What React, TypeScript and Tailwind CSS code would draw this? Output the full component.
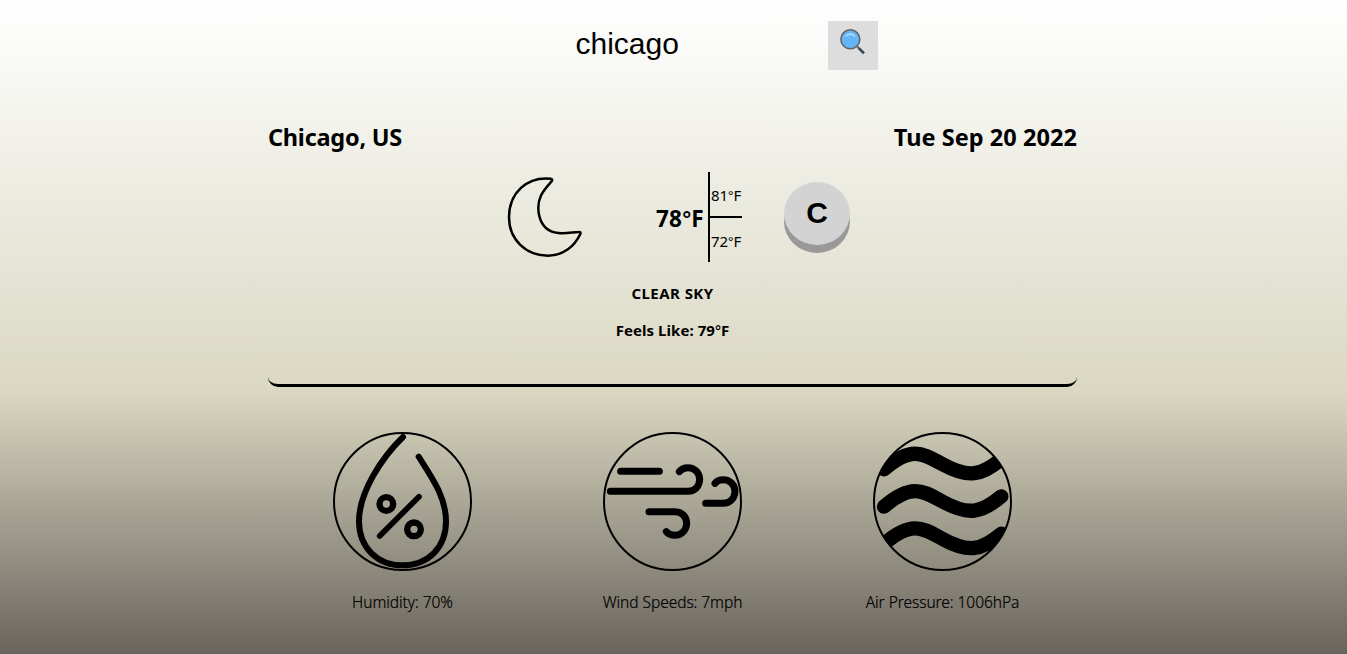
import type { ReactNode } from "react";

const SANS = "font-['Noto_Sans','Open_Sans',sans-serif]";

function SearchIcon() {
  return (
    <svg className="block h-[30px] w-[30px]" viewBox="0 0 90 90" fill="none">
      <path d="M53 51 L62 60" stroke="#616161" strokeWidth="6" />
      <path d="M60 58 L75 73" stroke="#37474f" strokeWidth="8" />
      <circle cx="34" cy="31" r="28.5" fill="#64b5f6" stroke="#616161" strokeWidth="4.5" />
      <path d="M21 21 Q34 9 47 21" stroke="#bbdefb" strokeWidth="4" strokeLinecap="round" />
    </svg>
  );
}

function MoonIcon() {
  return (
    <svg
      className="block h-[90px] w-[90px]"
      viewBox="30 20 270 270"
      fill="none"
      stroke="#000"
      strokeWidth="7.5"
      strokeLinejoin="round"
    >
      <path d="M182 40 C111 33 57 82 57 156 C57 223 108 271 174 271 C219 271 253 244 271 206 C273 201 270 199 265 200 C240 202 224 205 205 203 C169 199 153 177 147 148 C137 98 164 71 184 49 C188 44 187 41 182 40 Z" />
    </svg>
  );
}

function Temp({ value }: { value: number }) {
  return (
    <>
      {value}
      <span className="font-['Liberation_Sans',Arial,sans-serif] leading-none">°</span>F
    </>
  );
}

function Gauge({ label, children }: { label: string; children: ReactNode }) {
  return (
    <div className="flex w-[270px] flex-col items-center">
      <svg
        className="block h-[139px] w-[139px]"
        viewBox="24 21 417 417"
        fill="none"
        stroke="#000"
        strokeLinecap="round"
        strokeLinejoin="round"
      >
        <circle cx="232.5" cy="229.5" r="205.5" strokeWidth="6" />
        {children}
      </svg>
      <p className="mt-[19px] h-6 whitespace-nowrap text-[15.5px] leading-6 font-light tracking-[-0.05px] [-webkit-text-stroke:0.2px_#000]">
        {label}
      </p>
    </div>
  );
}

export default function App() {
  return (
    <main
      className={`h-[654px] w-full overflow-hidden bg-[linear-gradient(180deg,#fff_0%,#ecebe1_30%,#dad8c1_60%,#69645d_100%)] text-black ${SANS}`}
    >
      <form className="ml-[568px] flex h-[91px] pt-[21px]" onSubmit={(e) => e.preventDefault()}>
        <input
          className="h-[45px] w-[260px] bg-transparent pl-[7.5px] font-['Liberation_Sans',Arial,sans-serif] text-[30px] outline-none"
          defaultValue="chicago"
          aria-label="City"
        />
        <button className="flex h-[49px] w-[50px] items-start bg-[#ddd] pt-[8px] pl-[11px]" aria-label="Search">
          <SearchIcon />
        </button>
      </form>

      <section className="ml-[268px] w-[809px] rounded-b-[10px] border-b-[3px] border-black">
        <div className="flex h-[81px] justify-between pt-[30px] text-[23.5px] leading-8 font-bold whitespace-nowrap">
          <h2 className="tracking-[-0.25px]">Chicago, US</h2>
          <h2 className="tracking-[0.05px]">Tue Sep 20 2022</h2>
        </div>

        <div className="flex h-[90px] pl-[232px]">
          <MoonIcon />
          <div className="ml-[66px] flex w-[52px] items-center text-[22.5px] font-bold tracking-[0.2px]">
            <span className="mt-[3px] whitespace-nowrap">
              <Temp value={78} />
            </span>
          </div>
          <div className="w-[34px] border-l-2 border-black text-center text-[15px] tracking-[-0.3px]">
            <div className="h-[46px] border-b-2 border-black pt-[11px] leading-6">
              <Temp value={81} />
            </div>
            <div className="pt-[11px] leading-6">
              <Temp value={72} />
            </div>
          </div>
          <button className="mt-[10px] ml-[42px] h-[63px] w-[66px] rounded-[50%] bg-[#d3d3d3] font-['Liberation_Sans',Arial,sans-serif] text-[30px] leading-[61px] font-bold shadow-[0_8px_0_#999]">
            <span className="block h-[63px]">C</span>
          </button>
        </div>

        <div className="h-[122px] pt-[19px] text-center text-[15px] leading-6 font-bold">
          <p className="tracking-[0.45px]">CLEAR SKY</p>
          <p className="mt-[13px] tracking-[0.05px]">
            Feels Like: <Temp value={79} />
          </p>
        </div>
      </section>

      <section className="mt-[45px] ml-[267.5px] flex w-[810px]">
        <Gauge label="Humidity: 70%">
          <path d="M234 36 C170 98 102 202 102 289 C102 367 157 421 232 421 C310 421 363 367 363 289 C363 215 319 155 281 95" strokeWidth="18" />
          <path d="M164 333 L282 215" strokeWidth="17" />
          <circle cx="184" cy="237" r="20.5" strokeWidth="19" />
          <circle cx="267" cy="313" r="20.5" strokeWidth="19" />
        </Gauge>
        <Gauge label="Wind Speeds: 7mph">
          <g strokeWidth="21">
            <path d="M77 139 H193" />
            <path d="M46 199 H279 C300 199 314 183 314 163 C314 143 298 128 279 128 C268 128 259 132 253 140" />
            <path d="M332 235 H385 C405 235 420 219 420 199 C420 179 404 164 385 164 C374 164 366 167 360 175" />
            <path d="M162 260 H240 C260 260 275 275 275 295 C275 315 259 331 240 331 C229 331 220 328 214 320" />
          </g>
        </Gauge>
        <Gauge label="Air Pressure: 1006hPa">
          <clipPath id="dial">
            <circle cx="232.5" cy="229.5" r="205.5" />
          </clipPath>
          <g strokeWidth="43" clipPath="url(#dial)">
            <path d="M57 133 C145 56 181 91 235 119 C310 160 350 152 409 102" />
            <path d="M57 245 C145 168 181 203 235 231 C310 272 350 264 409 214" />
            <path d="M57 357 C145 280 181 315 235 343 C310 384 350 376 409 326" />
          </g>
        </Gauge>
      </section>
    </main>
  );
}
